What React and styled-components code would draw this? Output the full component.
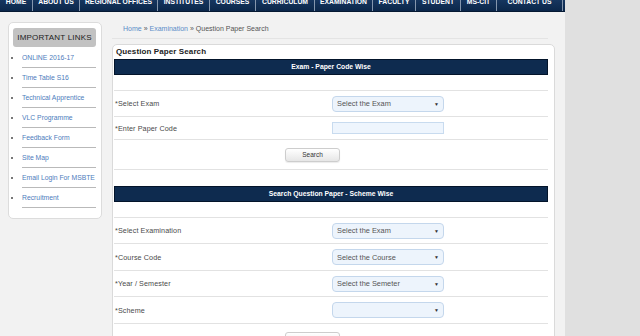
import styled, { createGlobalStyle } from 'styled-components';

const GlobalStyle = createGlobalStyle`
  body {
    margin: 0;
    background: #e0e0e0;
    font-family: Arial, "Liberation Sans", Helvetica, sans-serif;
  }
`;

const Page = styled.div`
  display: flex;
  min-height: 100vh;
`;

const Main = styled.div`
  width: 565px;
  background: #f2f2f2;
  min-height: 100vh;
`;

const Nav = styled.nav`
  display: flex;
  height: 12px;
  overflow: hidden;
  background: linear-gradient(#16365f, #0b274a);
  border-bottom: 1px solid #061a33;
  box-sizing: border-box;
`;

const NavItem = styled.a`
  width: ${(p) => p.$w}px;
  flex: none;
  box-sizing: border-box;
  border-right: 1px solid #8496ad;
  margin-top: -2px;
  line-height: 8px;
  text-align: center;
  color: #fff;
  font-weight: bold;
  font-size: 6.8px;
  text-transform: uppercase;
  white-space: nowrap;
`;

const Body = styled.div`
  display: flex;
  align-items: flex-start;
  padding: 10px 0 0 8px;
`;

const Sidebar = styled.aside`
  width: 94px;
  box-sizing: border-box;
  background: #fff;
  border: 1px solid #dcdcdc;
  border-radius: 5px;
  padding: 5px 5px 10px 4px;
`;

const SideHeader = styled.div`
  height: 19px;
  line-height: 19px;
  background: #c2c2c2;
  border-radius: 3px;
  text-align: center;
  font-size: 8px;
  letter-spacing: 0.2px;
  color: #1c1c1c;
`;

const LinkList = styled.ul`
  list-style: square outside;
  margin: 1px 0 0 9px;
  padding: 0;
`;

const LinkItem = styled.li`
  height: 20px;
  box-sizing: border-box;
  line-height: 19px;
  border-bottom: 1px solid #b9b9b9;
  font-size: 6.8px;
  color: #4d7cbc;
  white-space: nowrap;
  &::marker {
    color: #777;
  }
`;

const Content = styled.div`
  width: 443px;
  margin-left: 10px;
`;

const Breadcrumb = styled.div`
  width: 436px;
  height: 17px;
  box-sizing: border-box;
  padding-left: 11px;
  line-height: 14px;
  font-size: 7px;
  color: #555;
  border-bottom: 1px solid #e4e4e4;
`;

const Crumb = styled.span`
  color: #5a8dc8;
`;

const Panel = styled.section`
  margin-top: 5px;
  background: #fff;
  border: 1px solid #dadada;
  border-radius: 5px;
  padding: 0 6px 0 1px;
  height: 300px;
`;

const PanelTitle = styled.div`
  height: 14px;
  line-height: 14px;
  padding-left: 2px;
  font-size: 8px;
  font-weight: bold;
  letter-spacing: 0.1px;
  color: #222;
`;

const SectionBar = styled.div`
  height: 16px;
  box-sizing: border-box;
  line-height: 14px;
  background: #0e2b4f;
  border: 1px solid #03142a;
  text-align: center;
  color: #fff;
  font-size: 6.8px;
  font-weight: bold;
`;

const Spacer = styled.div`
  height: ${(p) => p.$h}px;
  box-sizing: border-box;
  border-top: ${(p) => (p.$line ? '1px solid #e2e2e2' : 'none')};
`;

const FormRow = styled.div`
  display: grid;
  grid-template-columns: 218px 1fr;
  align-items: center;
  height: ${(p) => p.$h}px;
  box-sizing: border-box;
  border-top: 1px solid #e2e2e2;
`;

const Label = styled.span`
  padding-left: 1px;
  font-size: 7.2px;
  letter-spacing: 0.1px;
  color: #4a4a4a;
`;

const SelectBox = styled.div`
  display: flex;
  align-items: center;
  justify-content: space-between;
  width: 112px;
  height: 16px;
  box-sizing: border-box;
  padding: 0 4px;
  background: #edf4fc;
  border: 1px solid #c4d7ec;
  border-radius: 4px;
  font-size: 7.4px;
  color: #555;
`;

const Arrow = styled.span`
  font-size: 5px;
  color: #333;
`;

const TextInput = styled.div`
  width: 112px;
  height: 12px;
  box-sizing: border-box;
  background: #eef5fd;
  border: 1px solid #c8dbef;
`;

const ButtonRow = styled.div`
  display: flex;
  align-items: ${(p) => (p.$top ? 'flex-start' : 'center')};
  height: ${(p) => p.$h}px;
  box-sizing: border-box;
  padding: ${(p) => (p.$top ? '8px' : '0')} 0 0 171px;
  border-top: 1px solid #e2e2e2;
`;

const Button = styled.button`
  width: 55px;
  height: 14px;
  padding: 0;
  background: linear-gradient(#ffffff, #e6e6e6);
  border: 1px solid #cdcdcd;
  border-radius: 3px;
  box-shadow: 0 1px 1px rgba(0, 0, 0, 0.08);
  font-family: inherit;
  font-size: 6.5px;
  color: #333;
`;

const navItems = [
  ['Home', 33],
  ['About Us', 47],
  ['Regional Offices', 78],
  ['Institutes', 52],
  ['Courses', 46],
  ['Curriculum', 59],
  ['Examination', 58],
  ['Faculty', 43],
  ['Student', 45],
  ['MS-CIT', 36],
  ['Contact Us', 66],
];

const links = [
  'ONLINE 2016-17',
  'Time Table S16',
  'Technical Apprentice',
  'VLC Programme',
  'Feedback Form',
  'Site Map',
  'Email Login For MSBTE',
  'Recruitment',
];

function Select({ text }) {
  return (
    <SelectBox>
      <span>{text}</span>
      <Arrow>▼</Arrow>
    </SelectBox>
  );
}

export default function App() {
  return (
    <>
      <GlobalStyle />
      <Page>
        <Main>
          <Nav>
            {navItems.map(([name, w]) => (
              <NavItem key={name} $w={w}>
                {name}
              </NavItem>
            ))}
          </Nav>
          <Body>
            <Sidebar>
              <SideHeader>IMPORTANT LINKS</SideHeader>
              <LinkList>
                {links.map((l) => (
                  <LinkItem key={l}>{l}</LinkItem>
                ))}
              </LinkList>
            </Sidebar>
            <Content>
              <Breadcrumb>
                <Crumb>Home</Crumb> » <Crumb>Examination</Crumb> » Question
                Paper Search
              </Breadcrumb>
              <Panel>
                <PanelTitle>Question Paper Search</PanelTitle>
                <SectionBar>Exam - Paper Code Wise</SectionBar>
                <Spacer $h={15} />
                <FormRow $h={26}>
                  <Label>*Select Exam</Label>
                  <Select text="Select the Exam" />
                </FormRow>
                <FormRow $h={23}>
                  <Label>*Enter Paper Code</Label>
                  <TextInput />
                </FormRow>
                <ButtonRow $h={30}>
                  <Button>Search</Button>
                </ButtonRow>
                <Spacer $h={17} $line />
                <SectionBar>Search Question Paper - Scheme Wise</SectionBar>
                <Spacer $h={15} />
                <FormRow $h={26}>
                  <Label>*Select Examination</Label>
                  <Select text="Select the Exam" />
                </FormRow>
                <FormRow $h={27}>
                  <Label>*Course Code</Label>
                  <Select text="Select the Course" />
                </FormRow>
                <FormRow $h={26}>
                  <Label>*Year / Semester</Label>
                  <Select text="Select the Semeter" />
                </FormRow>
                <FormRow $h={27}>
                  <Label>*Scheme</Label>
                  <Select text="" />
                </FormRow>
                <ButtonRow $h={30} $top>
                  <Button>Search</Button>
                </ButtonRow>
              </Panel>
            </Content>
          </Body>
        </Main>
      </Page>
    </>
  );
}
